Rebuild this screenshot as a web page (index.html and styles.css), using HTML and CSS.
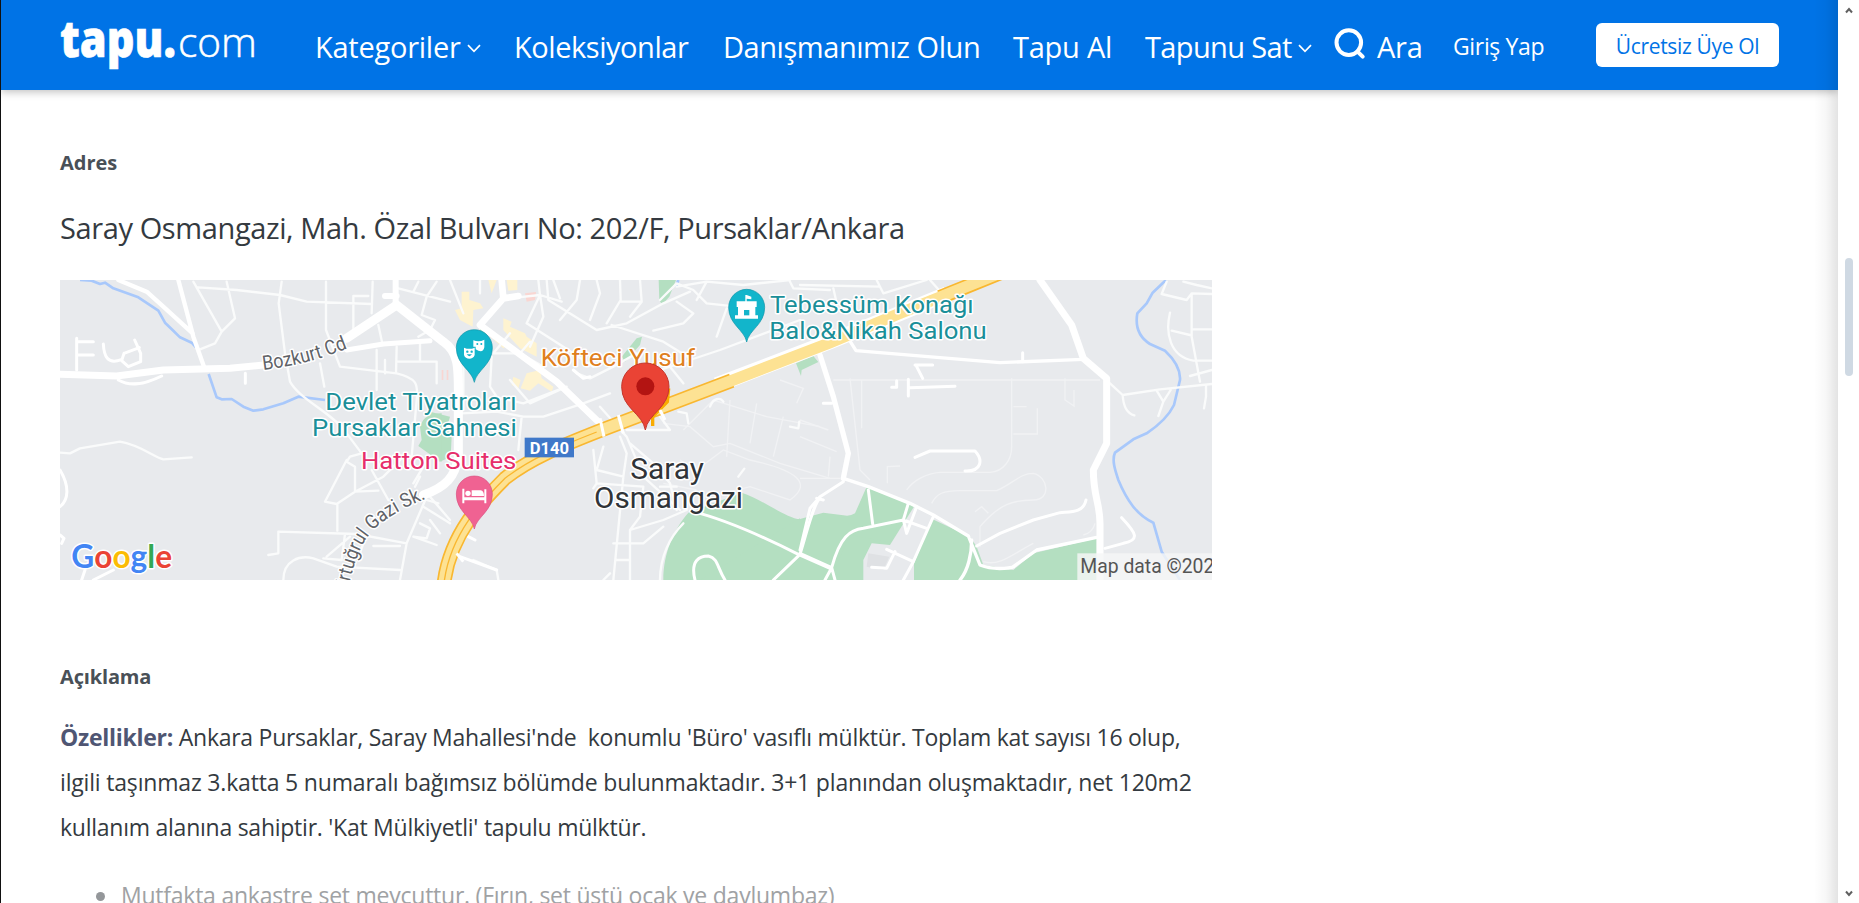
FILE: index.html
```html
<!DOCTYPE html>
<html lang="tr">
<head>
<meta charset="utf-8">
<title>tapu.com</title>
<link rel="stylesheet" href="styles.css">
</head>
<body>
<div class="window">
<div class="page">
  <header class="header">
    <svg class="logo" width="200" height="60" viewBox="0 0 200 60">
      <text class="logo-bold" x="0" y="42" textLength="116" lengthAdjust="spacingAndGlyphs">tapu.</text>
      <text class="logo-light" x="118" y="42" textLength="79" lengthAdjust="spacingAndGlyphs">com</text>
    </svg>
    <a class="nav nav-wide"><span>Kategoriler</span><svg class="chev" width="14" height="9" viewBox="0 0 14 9"><path d="M1 1.2 7 7.4 13 1.2"/></svg></a>
    <a class="nav nav-tight">Koleksiyonlar</a>
    <a class="nav nav-tight">Danışmanımız Olun</a>
    <a class="nav">Tapu Al</a>
    <a class="nav nav-sell"><span>Tapunu Sat</span><svg class="chev" width="14" height="9" viewBox="0 0 14 9"><path d="M1 1.2 7 7.4 13 1.2"/></svg></a>
    <a class="nav search-link"><svg class="search" width="32" height="32" viewBox="0 0 32 32"><circle cx="14.8" cy="14.6" r="12.3"/><path d="M23.3 23.3 28.7 28.7"/></svg><span>Ara</span></a>
    <a class="nav nav-small">Giriş Yap</a>
    <a class="signup">Ücretsiz Üye Ol</a>
  </header>
  <main class="main">
    <h2 class="label">Adres</h2>
    <p class="address">Saray Osmangazi, Mah. Özal Bulvarı No: 202/F, Pursaklar/Ankara</p>
    <svg class="map" width="1152" height="300" viewBox="30 30 3456 900">
      <rect x="30" y="30" width="3456" height="900" fill="#e8eaed"/>

      <!-- parks and built-up blocks -->
      <g transform="translate(1140 0)">
        <path fill="#b4dfc1" d="M700 930C700 850 730 780 775 728L935 668C1000 690 1070 745 1110 748C1150 750 1170 728 1210 728L1225 735C1260 750 1275 740 1290 700L1312 650 1430 700 1510 735 1480 790 1380 930ZM686 30H738L718 80 696 104 688 90ZM575 260 620 205 636 200 630 225 585 275ZM1098 280 1150 258 1165 276 1115 300 1113 318ZM150 165 175 178 170 195 150 185ZM0 425 60 440 50 475 65 500 62 560 30 575 0 560Z"/>
        <path fill="#fef3d0" d="M95 65H118V90L150 100 160 115 130 120 128 170 90 150 75 120 95 115ZM175 30H200L185 70ZM230 30H262V60L235 62ZM220 145 245 155 240 170 285 190 290 200 320 220 320 260 270 235 220 180ZM165 185 235 225 220 235ZM250 320 272 330 265 355 245 345ZM290 310 330 300 335 325 370 350 365 365 325 340 300 362 272 355Z"/>
        <path fill="#f9d6d2" d="M285 70 318 66 315 90 290 95ZM35 300H40V330H35ZM50 300H55V330H50Z"/>
      </g>
      <path fill="#b4dfc1" d="M1110 470C1120 440 1140 430 1175 430V575L1150 560 1105 528 1115 510Z"/>
      <g transform="translate(2250 0)">
        <path fill="#b4dfc1" d="M200 655 510 800 530 830 550 885 640 900 700 850 890 805V930H342V880L400 740 350 712 290 770C270 830 275 815 235 810L150 795 90 930H-300L0 745Z"/>
        <path fill="#e8eaed" d="M190 870 215 820 270 825 345 705 400 738 342 880V930H190Z"/>
        <path fill="#e8eaed" d="M0 700 130 640 198 655 165 730Q150 740 130 736L70 728 0 747Z"/>
        <path fill="#dfe1e4" d="M205 850 268 860 250 900 200 890Z"/>
      </g>

      <!-- rivers -->
      <g fill="none" stroke="#a8c8fb" stroke-width="8" stroke-linejoin="round">
        <path d="M90 30 125 32 150 42 165 38 190 55 265 82 325 122 345 158 370 182 390 202 425 218 438 232M476 312 500 382 515 388 545 387 580 410 610 422 640 418 700 400 745 380 825 390"/>
        <path transform="translate(2250 0)" d="M1098 30 1058 68 1040 100 1012 130C1005 170 1015 200 1050 222L1095 242C1125 270 1142 300 1140 330L1122 405C1105 440 1070 470 1040 490L1000 508 945 548C935 570 945 600 955 630C980 690 1010 735 1060 758L1085 845 1140 930"/>
        <path transform="translate(1140 0)" d="M745 30 738 50"/>
      </g>

      <!-- faint tracks -->
      <g fill="none" stroke="#f1f2f4" stroke-width="4">
        <path transform="translate(2250 0)" d="M100 330H900M150 325 180 600 210 630M185 330V475M635 325V530C635 570 610 605 570 607H420C380 610 340 630 320 660M640 410H680M712 415V492H640M795 325V390L822 408V360M395 700C410 670 430 662 480 662H590C640 640 660 610 700 610C745 620 755 690 700 690C640 690 600 700 540 770V830M525 725 545 710 565 730M262 640V590L300 588M0 625 120 625M0 500 110 545M0 450 85 480M90 560 85 620M885 760C880 780 870 790 850 795M550 875C600 890 640 850 700 820"/>
        <path transform="translate(1140 0)" d="M700 460 780 470 850 530 900 520 1050 580 1200 625M760 480 850 390 1010 440 1170 470M900 390 890 560M980 400 960 520M1060 440 1030 560M750 570 800 600 880 540 960 570C1100 600 1150 640 1080 690L960 650 880 670M1050 330 1120 355 1100 400M700 640 800 660"/>
      </g>

      <!-- minor streets -->
      <g fill="none" stroke="#fafbfb" stroke-width="7" stroke-linejoin="round" stroke-linecap="round">
        <path d="M430 35 515 185 555 145 530 35M515 185 495 220 450 238M445 52 560 60 690 75 770 95 965 102M695 35 686 100 705 250 720 335C750 390 850 430 890 490L935 550M828 35V180L870 290 1040 310C1100 325 1105 340 1100 390L1085 560M910 190V78H955M968 35 965 130M985 165 998 225M980 240V360M1040 230 1038 310M1040 275H1160V340M1110 215V275M1005 270V310M810 280 823 350M30 548 60 550 90 535 210 515C270 525 310 560 340 568L425 562M890 570 825 695 860 702 915 665 985 662M935 550 900 560 890 575 915 590 915 665 1000 620 1060 560M965 600 1015 690M862 702V782M1090 640 1120 590M1110 620 1095 650M885 792 875 870 820 865M685 785 920 792 1070 820 1130 680M685 785V850L655 855M700 930C700 870 750 855 790 865L860 890 1050 900M1070 820 1050 930M900 800 830 860M940 820 930 850M970 828H1050M1110 760 1140 775 1130 805 1090 800 1160 825M1120 710 1200 760M1130 690 1165 700M1045 55 1200 95M1105 35 1090 65M1160 35 1130 80 1115 135 1155 150 1140 180 1105 200"/>
        <path transform="translate(1140 0)" d="M60 30 100 130M150 30V70M235 85 330 75 395 95M325 30 330 75 290 160M350 30 355 90 500 180 590 160 700 100 780 65M450 30 440 90 390 150M500 30 510 70 480 150M570 30 572 90 530 160M630 30 635 95 600 140M570 95H635M690 90 740 40 790 60 830 100 920 110M740 95 790 130 760 160 670 182M545 165 700 215 780 265M370 30 390 85M330 75 340 140 300 230M290 160 400 230 490 290M240 190 190 250H270L300 215M270 250 340 290M100 290V420M185 260 180 350 200 380M240 330 300 400 410 350M280 440H340L460 400 540 370M275 440 265 540M190 380 280 400 410 350M95 430 200 425 280 440M440 310 480 325 550 290M550 290 620 250M510 410 590 500 640 620 750 720M490 540 500 640 490 655M520 530 500 600 580 620M570 500 590 550 580 620 550 930M590 480 720 480 690 440M600 520 670 580 720 640 740 720M500 640 640 650 630 740 600 780 600 930M600 780 700 750 770 720M550 820H640L700 770M560 870H600M690 650H740M740 50 830 35 940 45 1080 30M830 35 800 90M890 115 860 200M690 300 870 240 1110 150M720 290 760 340M540 910 520 930M690 930C690 860 720 800 760 760M0 680 60 750M0 750 30 790M840 410C850 385 870 380 880 395M1080 470 1105 475 1108 455M925 620 943 596M745 425 770 430 775 460M1080 35 1090 55 1200 60M130 870 200 900 205 930"/>
        <path transform="translate(2250 0)" d="M0 45 240 50 230 30M240 50 250 70 380 30M390 30 430 75M100 55 110 100M1100 35 1085 72 1160 90 1175 70 1236 72M1175 70V200L1200 335M1110 128C1095 190 1110 260 1180 272H1236M1115 182 1170 195M1180 178H1236M1150 35 1190 45 1236 55M1170 318 1236 300M930 340 968 375 1080 358 1236 342M968 375C970 410 980 430 1003 436M1070 362 1090 395 1112 360M1090 395 1075 438M1218 345V380L1212 415"/>
      </g>
      <g fill="none" stroke="#fff" stroke-width="9" stroke-linejoin="round" stroke-linecap="round">
        <path d="M80 205V300M82 215H130M82 255H130M160 222C162 258 172 285 214 269M222 250 268 233M254 210 272 250 272 275 235 290 215 272 222 250M205 330C240 350 280 345 335 318M586 310V340M30 600C60 650 55 690 30 710M105 900 95 930M190 900 130 930M30 795 42 805 35 820"/>
        <path transform="translate(1140 0)" d="M790 725C870 745 960 780 1105 853L1200 895M1110 853C1130 790 1150 700 1170 685M1110 853 1030 930M795 930C780 870 810 858 835 858C865 865 860 890 885 930M90 860 200 900M430 300 460 325 480 320M115 800 135 810"/>
        <path transform="translate(2250 0)" d="M345 285H398M350 290 368 325M325 328V378M330 353 465 349M290 332V352H275M345 562 390 543H525C550 570 545 605 495 603M858 690C850 730 810 725 780 728L700 750 600 790 530 828M965 743C1010 790 1020 810 970 820L915 835M668 248V275M70 400H95M130 635 60 680 30 715 0 840M0 850 95 893 75 930M95 893 105 930M95 893C120 800 150 780 190 775L310 750 325 700M205 660 218 762M350 710 320 790 310 750 380 775M400 740 340 875 260 838M285 845 260 895 215 892M340 875 310 930M50 685 70 690"/>
      </g>

      <!-- main roads -->
      <g fill="none" stroke="#fff" stroke-linejoin="round" stroke-linecap="round">
        <path stroke-width="13" d="M205 30 290 65 340 110 428 190M385 30 430 200 462 290"/>
        <path stroke-width="21" d="M30 313 200 318 340 300 540 295 640 285"/>
        <path stroke-width="15" d="M890 240 1000 222 1140 212"/>
        <path stroke-width="27" d="M890 205 1040 105 1180 215C1230 250 1225 300 1225 400V560C1215 620 1190 650 1120 675"/>
        <path stroke-width="18" d="M1037 30V100M1005 78H1040"/>
        <g transform="translate(1140 0)">
          <path stroke-width="20" d="M215 30 220 85 150 165 380 335 515 465M220 85 265 78"/>
        </g>
        <g transform="translate(2250 0)">
          <path stroke-width="10" d="M145 205 168 242 600 278 850 268M130 625 205 650 330 700 400 735 505 798 540 885C590 905 650 890 640 890L710 840 890 802M515 810C515 850 505 900 480 930"/>
          <path stroke-width="16" d="M60 255 100 380 145 550 130 625"/>
          <path stroke-width="21" d="M720 30 815 165 850 265 920 325V520L880 600C880 680 900 700 900 760V930"/>
        </g>
      </g>

      <!-- D140 highway -->
      <g transform="translate(1140 0)" fill="none">
        <path stroke="#fff" stroke-width="46" d="M860 345 1200 215 1410 130 1550 72"/>
        <path stroke="#f9b730" stroke-width="44" d="M42 940C60 790 160 690 225 625C300 565 400 525 515 480L905 332M1530 82 1720 5"/>
        <path stroke="#fde293" stroke-width="34" d="M42 940C60 790 160 690 225 625C300 565 400 525 515 480L905 332 1200 218 1410 130 1720 5"/>
        <path stroke="#f9b730" stroke-width="4" d="M42 940C60 790 160 690 225 625C300 565 400 525 500 486"/>
        <path stroke="#f9ab00" stroke-width="10" d="M716 355 712 395 668 440V468"/>
        <path stroke="#fff" stroke-width="9" d="M510 445 522 500M565 435 580 490M690 420 705 450M80 850 100 875"/>
      </g>

      <!-- street and place names -->
      <path id="bozkurt" fill="none" d="M640 300Q775 284 900 232"/>
      <path id="ertugrul" fill="none" d="M893 965C915 860 940 800 990 762Q1050 715 1148 678"/>
      <g class="halo street">
        <text><textPath href="#bozkurt" textLength="262" lengthAdjust="spacingAndGlyphs">Bozkurt Cd</textPath></text>
        <text><textPath href="#ertugrul" textLength="388" lengthAdjust="spacingAndGlyphs">Ertuğrul Gazi Sk.</textPath></text>
      </g>
      <g class="halo place teal">
        <text x="826" y="420" textLength="574" lengthAdjust="spacingAndGlyphs">Devlet Tiyatroları</text>
        <text x="786" y="497" textLength="614" lengthAdjust="spacingAndGlyphs">Pursaklar Sahnesi</text>
        <text x="2160" y="130" textLength="611" lengthAdjust="spacingAndGlyphs">Tebessüm Konağı</text>
        <text x="2158" y="207" textLength="652" lengthAdjust="spacingAndGlyphs">Balo&amp;Nikah Salonu</text>
      </g>
      <text class="halo place pink" x="933" y="597" textLength="466" lengthAdjust="spacingAndGlyphs">Hatton Suites</text>
      <text class="halo place orange" x="1472" y="289" textLength="463" lengthAdjust="spacingAndGlyphs">Köfteci Yusuf</text>
      <g class="halo town">
        <text x="1741" y="628" textLength="221" lengthAdjust="spacingAndGlyphs">Saray</text>
        <text x="1632" y="713" textLength="447" lengthAdjust="spacingAndGlyphs">Osmangazi</text>
      </g>
      <rect x="1424" y="503" width="148" height="59" fill="#3f78c9"/>
      <text class="shield" x="1439" y="551" textLength="118" lengthAdjust="spacingAndGlyphs">D140</text>

      <!-- pins -->
      <g transform="translate(1140 0)">
        <g fill="#12b5cb" stroke="#0e93a6" stroke-width="2">
          <path d="M133 337C126 300 79 285 79 233A54 54 0 0 1 187 233C187 285 140 300 133 337Z"/>
          <path d="M950 216C943 179 896 164 896 112A54 54 0 0 1 1004 112C1004 164 957 179 950 216Z"/>
        </g>
        <path fill="#f06292" stroke="#d94f80" stroke-width="2" d="M133 777C126 740 79 725 79 672A54 54 0 0 1 187 672C187 725 140 740 133 777Z"/>
        <path fill="#fff" d="M130 211Q147 218 163 209V232C160 247 150 246 137 238V230H130ZM102 233Q118 240 134 233V255C130 270 106 270 102 255Z"/>
        <g fill="#12b5cb"><circle cx="112" cy="245" r="3.5"/><circle cx="125" cy="245" r="3.5"/><circle cx="142" cy="222" r="3"/><circle cx="154" cy="222" r="3"/><path d="M110 253H126Q118 264 110 253Z"/></g>
        <path fill="#fff" d="M946 75H950L964 80V88L950 86V94H980V111H976V136H984V146H915V136H924V111H920V94H946Z"/>
        <path fill="#12b5cb" d="M942 136V120H958V136Z"/>
        <path fill="#fff" d="M97 656H103V682H163V658H169V700H163V691H103V700H97ZM125 678V661H152Q162 663 162 678Z"/>
        <circle cx="114" cy="670" r="8" fill="#fff"/>
        <path fill="#ea4335" stroke="#c5372c" stroke-width="3" d="M646 480C638 430 575 415 575 350A71 71 0 0 1 717 350C717 415 654 430 646 480Z"/>
        <circle cx="646" cy="349" r="27" fill="#b31412"/>
      </g>

      <!-- attribution -->
      <text class="halo google" x="64" y="893" textLength="302" lengthAdjust="spacingAndGlyphs"><tspan fill="#4285f4">G</tspan><tspan fill="#ea4335">o</tspan><tspan fill="#fbbc04">o</tspan><tspan fill="#4285f4">g</tspan><tspan fill="#34a853">l</tspan><tspan fill="#ea4335">e</tspan></text>
      <rect x="3082" y="850" width="404" height="80" fill="#f5f6f7" fill-opacity=".82"/>
      <text class="credit" x="3091" y="908" textLength="402" lengthAdjust="spacingAndGlyphs">Map data ©202</text>
    </svg>
    <h2 class="label label-desc">Açıklama</h2>
    <div class="desc">
      <div class="line-a"><b>Özellikler:</b> Ankara Pursaklar, Saray Mahallesi'nde&nbsp; konumlu 'Büro' vasıflı mülktür. Toplam kat sayısı 16 olup,</div>
      <div class="line-b">ilgili taşınmaz 3.katta 5 numaralı bağımsız bölümde bulunmaktadır. 3+1 planından oluşmaktadır, net 120m2</div>
      <div class="line-c">kullanım alanına sahiptir. 'Kat Mülkiyetli' tapulu mülktür.</div>
    </div>
    <ul class="list"><li>Mutfakta ankastre set mevcuttur. (Fırın, set üstü ocak ve davlumbaz)</li></ul>
  </main>
  <div class="edge-shade"></div>
</div>
<aside class="scrollbar">
  <svg width="8" height="7" viewBox="0 0 8 7"><path d="M1 5.5 4 2 7 5.5"/></svg>
  <div class="thumb"></div>
  <svg class="down" width="8" height="7" viewBox="0 0 8 7"><path d="M1 1.5 4 5 7 1.5"/></svg>
</aside>
</div>
</body>
</html>
```
FILE: styles.css
```css
body {
  margin: 0;
  background: #fff;
  font-family: "Open Sans", "Noto Sans", sans-serif;
  overflow: hidden;
}
.window { display: flex; height: 903px; }
.page {
  position: relative;
  width: 1838px;
  height: 903px;
  overflow: hidden;
  box-sizing: border-box;
  border-left: 1px solid #111;
}
.header {
  height: 90px;
  background: #0073e6;
  box-shadow: 0 2px 8px rgba(0, 0, 0, .25);
  display: grid;
  grid-template-columns: 255px 199px 209px 290px 132px 189px 119px 143px 184px;
  padding-left: 59px;
  align-items: center;
  color: #fff;
}
.logo { overflow: visible; }
.logo-bold { font: 800 51px "Open Sans", sans-serif; fill: #fff; stroke: #fff; stroke-width: .6px; }
.logo-light { font: 300 41px "Open Sans", sans-serif; fill: #fff; stroke: #fff; stroke-width: .5px; }
.nav {
  display: flex;
  align-items: center;
  gap: 6px;
  padding-top: 2px;
  font-size: 29px;
  letter-spacing: -.25px;
  white-space: nowrap;
}
.nav-tight { letter-spacing: -.45px; }
.nav-sell { letter-spacing: -.65px; }
.nav-small { font-size: 23px; letter-spacing: -.35px; }
.chev { fill: none; stroke: #fff; stroke-width: 1.7; margin-top: 4px; }
.search { fill: none; stroke: #fff; stroke-width: 4; stroke-linecap: round; margin-top: -4px; }
.search-link { gap: 11px; }
.signup {
  width: 183px;
  height: 44px;
  line-height: 46px;
  border-radius: 6px;
  background: #fff;
  color: #0073e6;
  font-size: 21px;
  font-weight: 500;
  letter-spacing: -.35px;
  text-align: center;
  white-space: nowrap;
}
.main { padding: 61px 59px 0; color: #343a40; }
.label {
  margin: 0;
  font-size: 20px;
  line-height: 24px;
  font-weight: 700;
  color: #495057;
}
.label-desc { margin-top: 85px; letter-spacing: -.15px; }
.address {
  margin: 31px 0 30px;
  font-size: 29px;
  line-height: 44px;
  letter-spacing: -.39px;
  white-space: nowrap;
}
.map { display: block; font-family: Roboto, sans-serif; }
.halo { stroke: #fff; stroke-width: 9px; stroke-linejoin: round; paint-order: stroke; }
.street { font-size: 60px; fill: #5f6368; }
.place { font-size: 74px; }
.teal { fill: #1a8f99; }
.pink { fill: #e62e6b; }
.orange { fill: #df801f; }
.town { font-size: 86px; fill: #303438; }
.shield { font-size: 48px; font-weight: 700; fill: #fff; }
.google { font-family: Lato, sans-serif; font-size: 99px; font-weight: 700; }
.credit { font-size: 58px; fill: #555; }
.desc {
  margin-top: 26px;
  font-size: 23px;
  line-height: 45px;
  white-space: nowrap;
}
.desc b { color: #4f5673; }
.line-a { letter-spacing: -.27px; }
.line-b { letter-spacing: -.18px; }
.line-c { letter-spacing: -.25px; }
.list {
  margin: 23px 0 0;
  padding-left: 61px;
  font-size: 23px;
  line-height: 45px;
  letter-spacing: -.24px;
  list-style: none;
  color: #a0a2a4;
  white-space: nowrap;
}
.list li::before {
  content: "";
  display: inline-block;
  width: 9px;
  height: 9px;
  margin: 0 16px 3px -25px;
  border-radius: 50%;
  background: #94979a;
}
.edge-shade {
  position: absolute;
  top: 0;
  right: 0;
  width: 24px;
  height: 100%;
  background: linear-gradient(to right, rgba(0, 0, 0, 0), rgba(0, 0, 0, .03) 50%, rgba(0, 0, 0, .11));
}
.scrollbar {
  width: 21px;
  box-sizing: border-box;
  padding: 7px 0 6px 7px;
  display: flex;
  flex-direction: column;
  background: #fff;
}
.scrollbar svg { fill: none; stroke: #606060; stroke-width: 2; }
.thumb {
  width: 8px;
  height: 118px;
  margin-top: 244px;
  border-radius: 4px;
  background: #cfd9e3;
}
.down { margin-top: auto; }
```
